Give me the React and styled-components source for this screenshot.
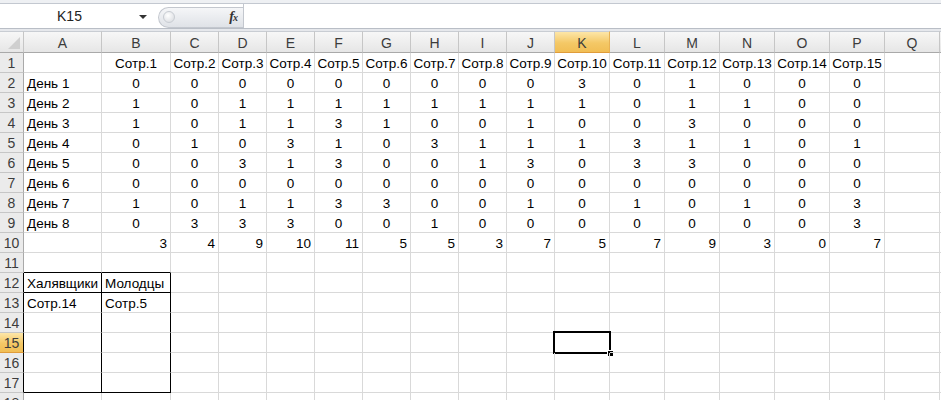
import React from 'react'
import styled, { createGlobalStyle, css } from 'styled-components'

const COLS = '24px 78px 69px 48px 48px 48px 48px 48px 48px 48px 48px 55px 55px 55px 55px 55px 55px 55px 55px'
const LETTERS = ['A', 'B', 'C', 'D', 'E', 'F', 'G', 'H', 'I', 'J', 'K', 'L', 'M', 'N', 'O', 'P', 'Q', '']
const GRID = '#d9d9d9'
const INK = '#000'

const GlobalStyle = createGlobalStyle`
  body {
    margin: 0;
    overflow: hidden;
    background: #fff;
    font-family: "Liberation Sans", Arial, sans-serif;
  }
`

const Page = styled.div`
  width: 941px;
  height: 400px;
  overflow: hidden;
  display: flex;
  flex-direction: column;
`

const TopStrip = styled.div`
  height: 3px;
  flex: none;
  background: #eef0f3;
  border-bottom: 1px solid #c3c8d0;
`

const FormulaBar = styled.div`
  height: 24px;
  flex: none;
  display: flex;
  background: #fff;
  border-bottom: 1px solid #b9bec6;
`

const NameBox = styled.div`
  width: 155px;
  display: flex;
  align-items: center;
  padding-right: 8px;
  box-sizing: border-box;
`

const NameText = styled.span`
  flex: 1;
  text-align: center;
  font-size: 14px;
  color: #222;
`

const DropArrow = styled.span`
  width: 0;
  height: 0;
  border-left: 4px solid transparent;
  border-right: 4px solid transparent;
  border-top: 4px solid #333;
  margin-top: 1px;
`

const FxArea = styled.div`
  width: 88px;
  display: flex;
  align-items: center;
  padding-left: 3px;
  box-sizing: border-box;
`

const Grip = styled.div`
  flex: 1;
  height: 21px;
  margin-top: 2px;
  border: 1px solid #c3c7ce;
  border-right: none;
  border-radius: 11px 0 0 11px;
  background: linear-gradient(#f5f6f8, #dfe2e7);
  display: flex;
  align-items: center;
  justify-content: space-between;
  padding: 0 6px 0 4px;
  box-sizing: border-box;
`

const GripDot = styled.span`
  width: 10px;
  height: 10px;
  border-radius: 50%;
  background: radial-gradient(circle at 40% 35%, #ffffff, #d5d8dd);
  border: 1px solid #c8ccd2;
`

const Fx = styled.span`
  font-family: "Liberation Serif", "Times New Roman", serif;
  font-style: italic;
  font-weight: bold;
  font-size: 14px;
  color: #333;
  letter-spacing: -1px;

  small {
    font-size: 10px;
  }
`

const FormulaInput = styled.div`
  flex: 1;
  border-left: 1px solid #c3c7ce;
  background: #fff;
`

const Gap = styled.div`
  height: 2px;
  flex: none;
  background: #e6e8ec;
`

const Row = styled.div`
  display: grid;
  grid-template-columns: ${COLS};
  height: ${p => p.$h}px;
  flex: none;
`

const headBg = css`
  background: linear-gradient(#f7f7f7, #e6e6e6);
`
const selBg = css`
  background: linear-gradient(#fde6a8, #f4c866 55%, #f1be55);
`

const ColHead = styled.div`
  ${p => (p.$sel ? selBg : headBg)};
  border-right: 1px solid ${p => (p.$sel ? '#e7b154' : '#c6c6c6')};
  border-bottom: 1px solid ${p => (p.$sel ? '#e09c3a' : '#a9a9a9')};
  border-top: 1px solid #c9cdd3;
  box-sizing: border-box;
  display: flex;
  align-items: center;
  justify-content: center;
  font-size: 14px;
  color: #3c3c3c;
  padding-top: 1px;
`

const Corner = styled(ColHead)`
  justify-content: flex-end;
  align-items: flex-end;
  padding: 0 3px 3px 0;
`

const RowHead = styled.div`
  ${p => (p.$sel ? selBg : css`background: #ebebeb;`)};
  border-right: 1px solid ${p => p.$br || '#a9a9a9'};
  border-bottom: 1px solid ${p => (p.$sel ? '#e09c3a' : '#c6c6c6')};
  box-sizing: border-box;
  display: flex;
  align-items: flex-end;
  justify-content: center;
  font-size: 14px;
  color: #3c3c3c;
  padding-bottom: 1px;
`

const Cell = styled.div`
  position: relative;
  border-right: 1px solid ${p => p.$br || GRID};
  border-bottom: 1px solid ${p => p.$bb || GRID};
  box-sizing: border-box;
  display: flex;
  align-items: flex-end;
  justify-content: ${p => p.$align || 'flex-start'};
  padding: 0 3px 1px 3px;
  font-size: 13.5px;
  color: #000;
  white-space: nowrap;
`

const Selection = styled.div`
  position: absolute;
  left: -2px;
  top: -2px;
  width: 58px;
  height: 23px;
  border: 2px solid #000;
  box-sizing: border-box;
  pointer-events: none;

  &::after {
    content: '';
    position: absolute;
    right: -5px;
    bottom: -5px;
    width: 5px;
    height: 5px;
    background: #000;
    border: 1px solid #fff;
  }
`

const days = [
  [0, 0, 0, 0, 0, 0, 0, 0, 0, 3, 0, 1, 0, 0, 0],
  [1, 0, 1, 1, 1, 1, 1, 1, 1, 1, 0, 1, 1, 0, 0],
  [1, 0, 1, 1, 3, 1, 0, 0, 1, 0, 0, 3, 0, 0, 0],
  [0, 1, 0, 3, 1, 0, 3, 1, 1, 1, 3, 1, 1, 0, 1],
  [0, 0, 3, 1, 3, 0, 0, 1, 3, 0, 3, 3, 0, 0, 0],
  [0, 0, 0, 0, 0, 0, 0, 0, 0, 0, 0, 0, 0, 0, 0],
  [1, 0, 1, 1, 3, 3, 0, 0, 1, 0, 1, 0, 1, 0, 3],
  [0, 3, 3, 3, 0, 0, 1, 0, 0, 0, 0, 0, 0, 0, 3],
]

const totals = days[0].map((_, i) => days.reduce((s, d) => s + d[i], 0))

function buildRow(r) {
  // one entry per column A..R: {text, align, br, bb}
  const cells = LETTERS.map(() => ({ text: '', align: 'flex-start' }))
  if (r === 1) {
    for (let i = 0; i < 15; i++) cells[i + 1] = { text: `Сотр.${i + 1}`, align: 'center' }
  } else if (r >= 2 && r <= 9) {
    cells[0] = { text: `День ${r - 1}` }
    days[r - 2].forEach((v, i) => { cells[i + 1] = { text: String(v), align: 'center' } })
  } else if (r === 10) {
    totals.forEach((v, i) => { cells[i + 1] = { text: String(v), align: 'flex-end' } })
  } else if (r === 11) {
    cells[0] = { ...cells[0], bb: INK }
    cells[1] = { ...cells[1], bb: INK }
  } else if (r >= 12 && r <= 17) {
    cells[0] = { text: '', br: INK }
    cells[1] = { text: '', br: INK }
    if (r === 12) {
      cells[0] = { text: 'Халявщики', br: INK, bb: INK }
      cells[1] = { text: 'Молодцы', br: INK, bb: INK }
    }
    if (r === 13) {
      cells[0] = { text: 'Сотр.14', br: INK }
      cells[1] = { text: 'Сотр.5', br: INK }
    }
    if (r === 17) {
      cells[0].bb = INK
      cells[1].bb = INK
    }
  }
  return cells
}

const CornerMark = () => (
  <svg width="12" height="12" viewBox="0 0 12 12">
    <polygon points="12,0 12,12 0,12" fill="#cfcfcf" />
  </svg>
)

export default function App() {
  const rows = Array.from({ length: 18 }, (_, i) => i + 1)
  return (
    <Page>
      <GlobalStyle />
      <TopStrip />
      <FormulaBar>
        <NameBox>
          <NameText>K15</NameText>
          <DropArrow />
        </NameBox>
        <FxArea>
          <Grip>
            <GripDot />
            <Fx>f<small>x</small></Fx>
          </Grip>
        </FxArea>
        <FormulaInput />
      </FormulaBar>
      <Gap />
      <Row $h={22}>
        <Corner><CornerMark /></Corner>
        {LETTERS.map((l, i) => (
          <ColHead key={i} $sel={l === 'K'}>{l}</ColHead>
        ))}
      </Row>
      {rows.map(r => (
        <Row key={r} $h={20}>
          <RowHead $sel={r === 15} $br={r >= 12 && r <= 17 ? INK : undefined}>{r}</RowHead>
          {buildRow(r).map((c, i) => (
            <Cell key={i} $align={c.align} $br={c.br} $bb={c.bb}>
              {c.text}
              {r === 15 && LETTERS[i] === 'K' && <Selection />}
            </Cell>
          ))}
        </Row>
      ))}
    </Page>
  )
}
